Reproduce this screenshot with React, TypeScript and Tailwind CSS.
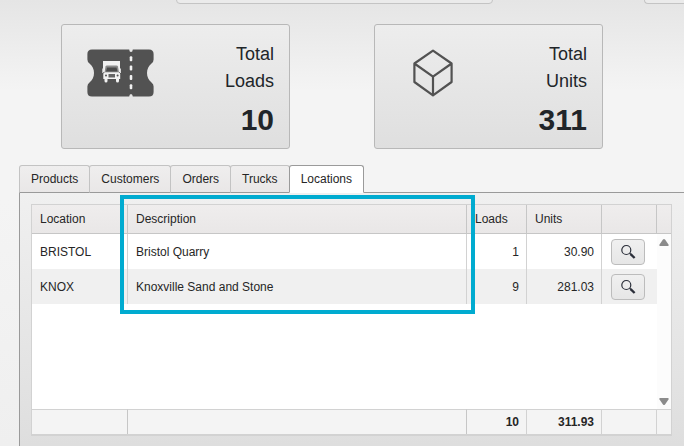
import { useState, type ReactNode } from "react";

const tabs = ["Products", "Customers", "Orders", "Trucks", "Locations"];

const rows = [
  { location: "BRISTOL", description: "Bristol Quarry", loads: "1", units: "30.90" },
  { location: "KNOX", description: "Knoxville Sand and Stone", loads: "9", units: "281.03" },
];

function TicketIcon() {
  return (
    <svg width="67" height="48" viewBox="0 0 67 48" aria-hidden="true">
      <path
        fill="#525252"
        d="M5 .5H42.2Q42.4 3 44 3Q45.600 3 45.800 .5H62Q66.600 .5 66.600 5V10.500Q66.600 13 64.500 14.500C61.500 17 60 20 60 24C60 28 61.500 31 64.500 33.500Q66.600 35 66.600 37.500V43Q66.600 47.500 62 47.500H45.800Q45.600 45 44 45Q42.400 45 42.200 47.500H5Q.4 47.500 .4 43V37.500Q.4 35 2.500 33.500C5.500 31 7 28 7 24C7 20 5.500 17 2.500 14.500Q.4 13 .4 10.500V5Q.4 .5 5 .5Z"
      />
      <g fill="#f1f1f1">
        <rect x="42.700" y="7.300" width="2.600" height="4.900" rx="1" />
        <rect x="42.700" y="16.600" width="2.600" height="4.900" rx="1" />
        <rect x="42.700" y="26" width="2.600" height="4.900" rx="1" />
        <rect x="42.700" y="35.300" width="2.600" height="4.900" rx="1" />
        <path d="M16 12H33V23H16Z" />
      </g>
      <path d="M17.500 23.500L18.500 17.500Q18.800 16.500 20 16.500H29.500Q30.700 16.500 31 17.500L32 23.500Z" fill="#8a8a8a" />
      <path d="M19 22.500L20 18.500H29.500L30.500 22.500Z" fill="#4a4a4a" />
      <path d="M16.300 25Q16.300 23.300 18 23.300H31.500Q33.200 23.300 33.200 25V30H32V32Q32 33.500 30.500 33.500Q29 33.500 29 32V30H20.500V32Q20.500 33.500 19 33.500Q17.500 33.500 17.500 32V30H16.300Z" fill="#f1f1f1" />
      <path d="M21.500 25H28V28.500H21.500Z" fill="#646464" />
      <circle cx="19" cy="26.500" r="1" fill="#525252" />
      <circle cx="30.600" cy="26.500" r="1" fill="#525252" />
      <path d="M15.200 19.500H16.300V24H15.200ZM33 19.500H34V24H33Z" fill="#d8d8d8" />
    </svg>
  );
}

function CubeIcon() {
  return (
    <svg width="40" height="48" viewBox="0 0 40 48" fill="none" stroke="#525252" strokeWidth="2.200" strokeLinejoin="round" aria-hidden="true">
      <path d="M20 1.700L38.600 14.500V33L20 46.400L1.400 33V14.500ZM1.400 14.500L20 27.700L38.600 14.500M20 27.700V46.400" />
    </svg>
  );
}

function SearchIcon() {
  return (
    <svg width="16" height="16" viewBox="0 0 16 16" fill="none" stroke="#2b2f3a" aria-hidden="true">
      <circle cx="6.300" cy="6" r="4.500" strokeWidth="1.200" />
      <path d="M9.700 9.300L11 10.500" strokeWidth="1.400" />
      <path d="M10.600 10.200L14.600 14" strokeWidth="2.400" />
    </svg>
  );
}

function StatCard({ icon, label, unit, value }: { icon: ReactNode; label: string; unit: string; value: string }) {
  return (
    <section className="flex flex-1 rounded-[3px] border border-[#b8b8b8] bg-linear-to-b from-[#ededed] to-[#dfdfdf] pr-[15px] pb-[3px] text-[#212529]">
      <div className="flex flex-1 justify-center pt-6">{icon}</div>
      <div className="flex w-[96px] flex-col pt-4 text-right">
        <h2 className="text-[18px] leading-[27px]">
          {label}
          <br />
          {unit}
        </h2>
        <strong className="text-[30px] leading-[50px]">{value}</strong>
      </div>
    </section>
  );
}

export default function App() {
  const [active, setActive] = useState("Locations");
  const cell = "border-r border-[#c6c6c6] px-2 font-normal";
  const num = "border-r border-[#d2d2d2] pr-[7px] text-right";

  return (
    <main className="flex h-screen flex-col overflow-hidden bg-[linear-gradient(to_bottom,#e5e5e5_0px,#f4f4f4_90px,#f4f4f4_200px,#efefef_446px)] font-['Liberation_Sans',Arial,sans-serif] text-[12px] text-[#262626]">
      <div className="flex h-1 shrink-0 items-end gap-[151px] pl-[176px]">
        <div className="h-4 w-[317px] shrink-0 rounded-b-[4px] border border-[#c4c4c4] bg-[#ebebeb]" />
        <div className="h-4 flex-1 rounded-bl-[4px] border-b border-l border-[#c4c4c4] bg-[#ebebeb]" />
      </div>

      <div className="flex shrink-0 gap-[84px] pt-5 pr-[81px] pl-[61px]">
        <StatCard icon={<TicketIcon />} label="Total" unit="Loads" value="10" />
        <StatCard icon={<CubeIcon />} label="Total" unit="Units" value="311" />
      </div>

      <div className="flex flex-1 flex-col pt-4 pl-[19px]">
        <div role="tablist" className="z-10 -mb-px flex">
          {tabs.map((tab) => (
            <button
              key={tab}
              type="button"
              role="tab"
              aria-selected={tab === active}
              onClick={() => setActive(tab)}
              className={
                "-mr-px h-7 rounded-t-[3px] border px-[11px] " +
                (tab === active
                  ? "z-10 border-[#9a9a9a] border-b-white bg-white"
                  : "border-[#c3c3c3] border-b-[#9a9a9a] bg-linear-to-b from-[#efeeee] to-[#e9e7e7]")
              }
            >
              {tab}
            </button>
          ))}
        </div>

        <div role="tabpanel" className="relative flex-1 border-t border-l border-[#9a9a9a] bg-linear-to-b from-[#f0f0f0] to-[#dedede] pt-[11px] pr-3 pl-[11px]">
          <table className="w-full table-fixed border-separate border-spacing-0 border border-b-2 border-[#d2d2d2] bg-white">
            <colgroup>
              <col className="w-[96px]" />
              <col />
              <col className="w-[60px]" />
              <col className="w-[75px]" />
              <col className="w-[55px]" />
              <col className="w-[14px]" />
            </colgroup>
            <thead>
              <tr className="h-[29px] bg-linear-to-b from-[#efeded] to-[#e9e7e7] text-left *:border-b *:border-[#c6c6c6]">
                <th scope="col" className={cell}>Location</th>
                <th scope="col" className={cell}>Description</th>
                <th scope="col" className={cell}>Loads</th>
                <th scope="col" className={cell}>Units</th>
                <td className="border-r" />
                <td />
              </tr>
            </thead>
            <tbody>
              {rows.map((row, i) => (
                <tr key={row.location} className="h-[35px]">
                  <td className={"border-r border-[#d2d2d2] px-2 " + (i % 2 ? "bg-[#f0f0f0]" : "")}>{row.location}</td>
                  <td className={"border-r border-[#d2d2d2] px-2 " + (i % 2 ? "bg-[#f0f0f0]" : "")}>{row.description}</td>
                  <td className={num + (i % 2 ? " bg-[#f0f0f0]" : "")}>{row.loads}</td>
                  <td className={num + (i % 2 ? " bg-[#f0f0f0]" : "")}>{row.units}</td>
                  <td className={"pl-[9px] " + (i % 2 ? "bg-[#f0f0f0]" : "")}>
                    <button
                      type="button"
                      aria-label={"View " + row.location}
                      className="flex h-[26px] w-[34px] items-center justify-center rounded-[4px] border border-[#bcbcbc] bg-linear-to-b from-[#f0f0f0] to-[#e6e6e6]"
                    >
                      <SearchIcon />
                    </button>
                  </td>
                  {i === 0 && (
                    <td rowSpan={3} className="h-px bg-[#fcfcfc]">
                      <div className="flex h-full flex-col items-center justify-between pt-[5px] pb-1">
                        <svg width="10" height="7" viewBox="0 0 10 7" fill="#8b8b8b" aria-hidden="true">
                          <path d="M4 .5Q5-.5 6 .5L9.500 5.500Q10 7 9 7H1Q0 7 .5 5.500Z" />
                        </svg>
                        <svg width="10" height="7" viewBox="0 0 10 7" fill="#8b8b8b" aria-hidden="true">
                          <path d="M4 6.500Q5 7.500 6 6.500L9.500 1.500Q10 0 9 0H1Q0 0 .5 1.500Z" />
                        </svg>
                      </div>
                    </td>
                  )}
                </tr>
              ))}
              <tr className="h-[105px]">
                <td colSpan={5} />
              </tr>
            </tbody>
            <tfoot>
              <tr className="h-[25px] bg-[#f4f4f4] font-bold *:border-t *:border-t-[#d2d2d2]">
                <td className={cell} />
                <td className={cell} />
                <td className={num}>10</td>
                <td className={num}>311.93</td>
                <td className="border-r border-r-[#d2d2d2]" />
                <td />
              </tr>
            </tfoot>
          </table>
          {/* Callout around the description column */}
          <div className="pointer-events-none absolute top-[2px] left-[100px] h-[119px] w-[355px] border-4 border-[#00abd0]" />
        </div>
      </div>
    </main>
  );
}
